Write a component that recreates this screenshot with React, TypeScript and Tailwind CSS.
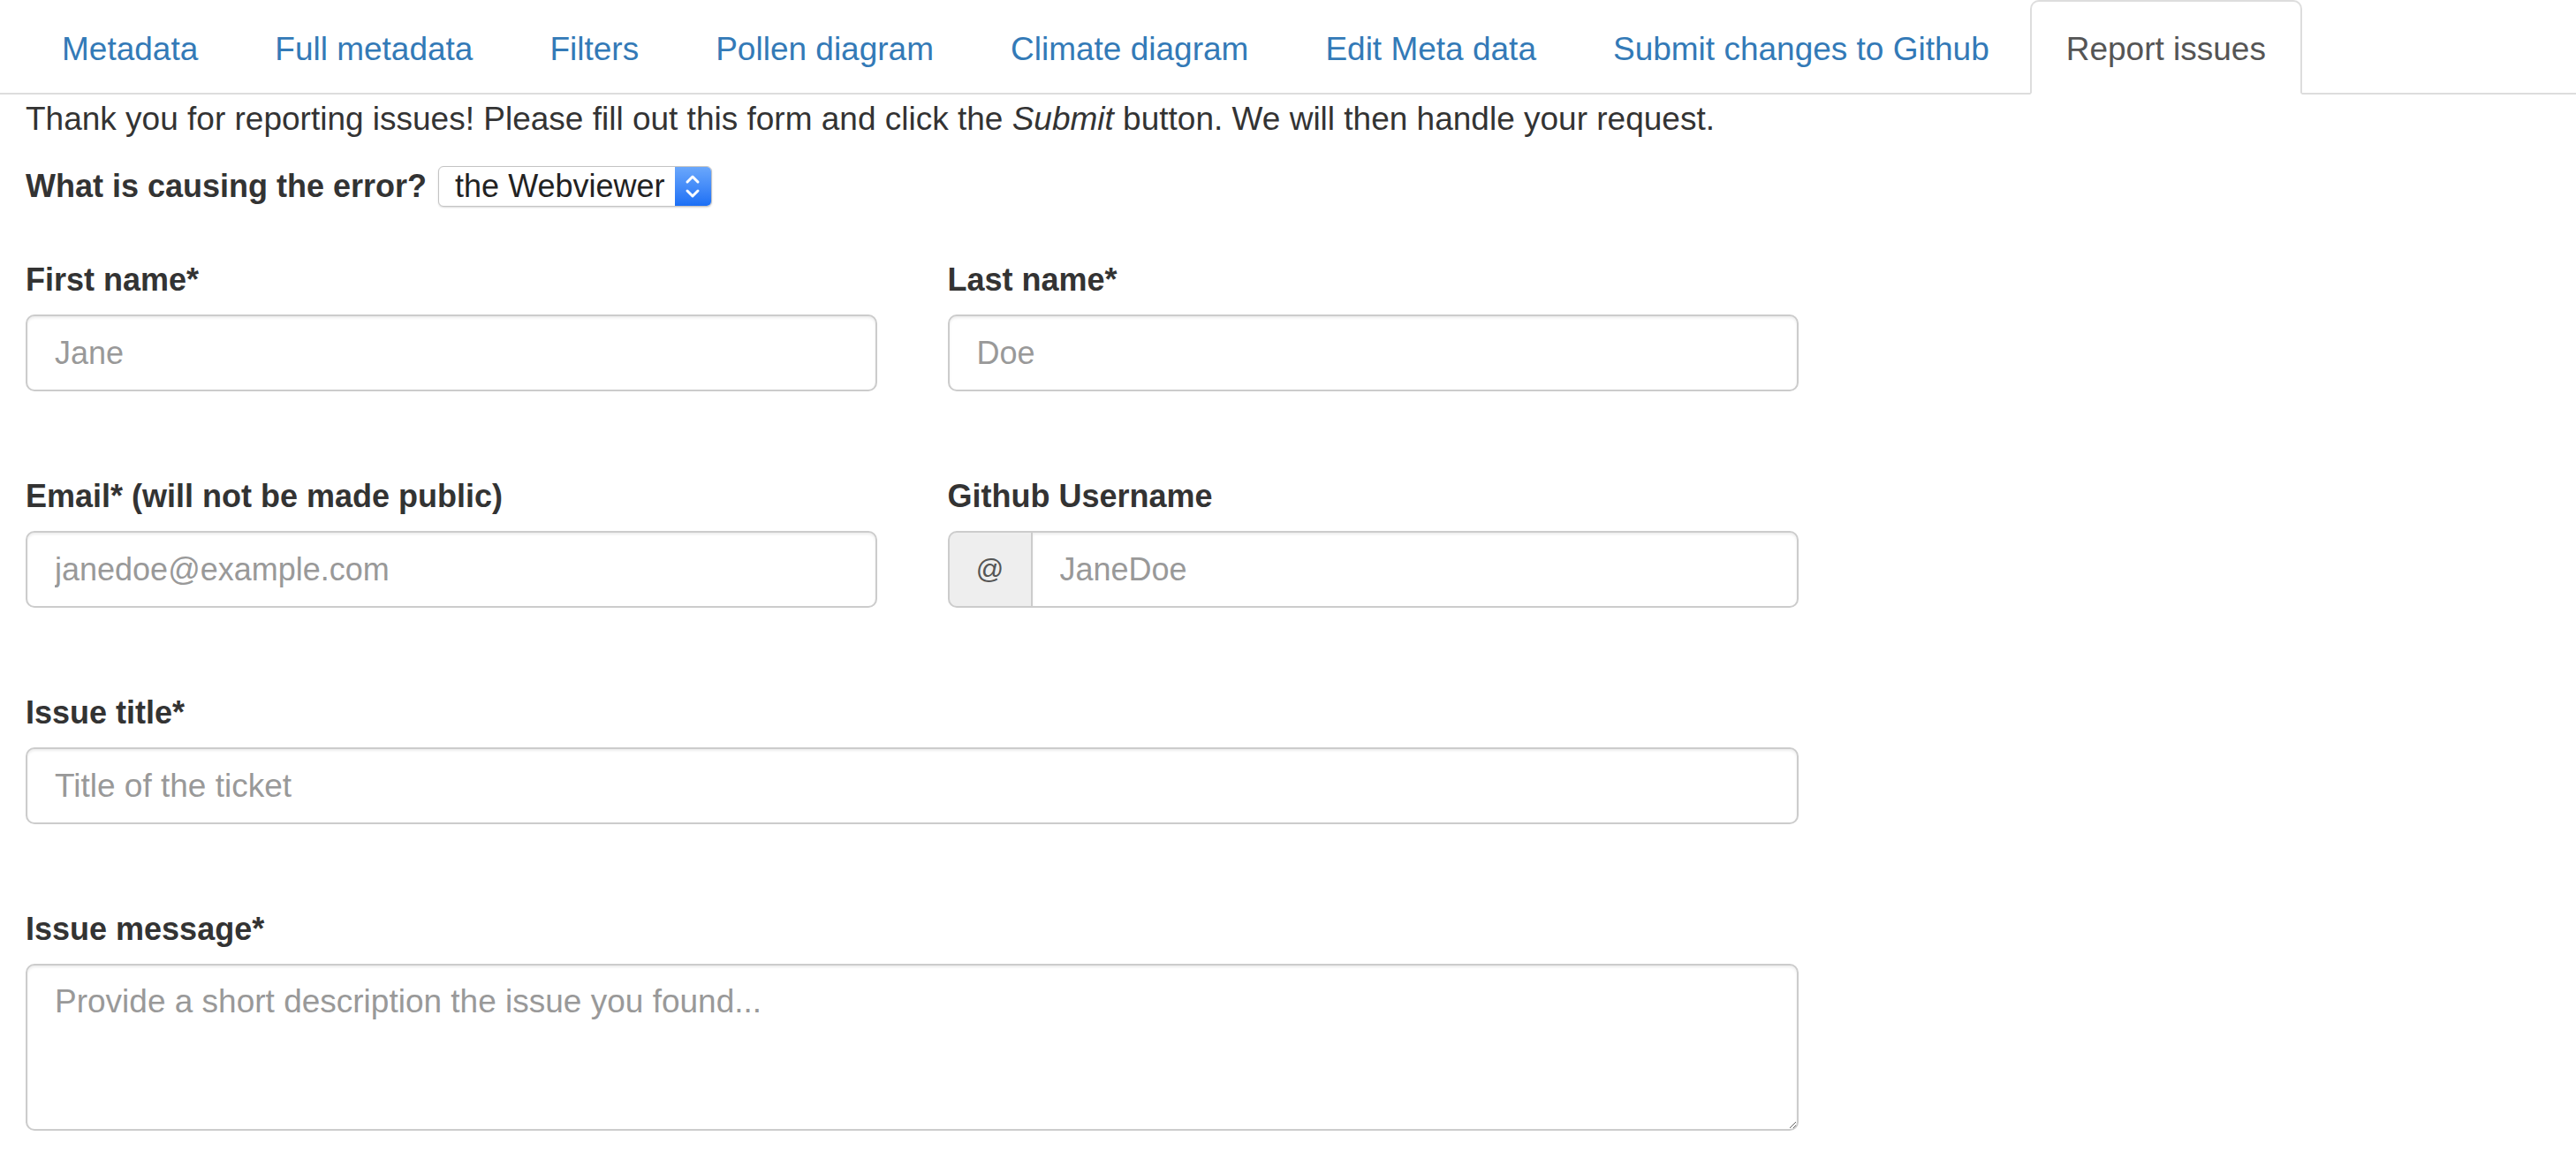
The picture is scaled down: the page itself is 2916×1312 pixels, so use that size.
import React from "react";

const tabs = [
  "Metadata",
  "Full metadata",
  "Filters",
  "Pollen diagram",
  "Climate diagram",
  "Edit Meta data",
  "Submit changes to Github",
  "Report issues",
];

const inputCls =
  "block w-full h-[87px] border-2 border-[#ccc] rounded-[10px] bg-white px-[31px] text-[36px] text-[#555] placeholder:text-[#999] shadow-[inset_0_2px_3px_rgba(0,0,0,0.075)] outline-none";

function Label({ children }: { children: React.ReactNode }) {
  return <label className="block font-bold text-[36px] leading-[52px] mb-[13px]">{children}</label>;
}

export default function App() {
  return (
    <div
      className="min-h-screen bg-white text-[#333] text-[37px] leading-[52px] px-[29px]"
      style={{ fontFamily: '"Liberation Sans", Arial, Helvetica, sans-serif' }}
    >
      {/* Tab bar */}
      <ul className="flex border-b-2 border-[#ddd] -mx-[29px] px-[29px]">
        {tabs.map((t) => {
          const active = t === "Report issues";
          return (
            <li key={t} className="-mb-[2px] mr-[5px]">
              <a
                className={`block border-2 rounded-t-[10px] px-[39px] pt-[28px] pb-[23px] leading-[52px] whitespace-nowrap ${
                  active
                    ? "bg-white border-[#ddd] border-b-transparent text-[#555]"
                    : "border-transparent text-[#337ab7]"
                }`}
              >
                {t}
              </a>
            </li>
          );
        })}
      </ul>

      <p className="pt-[2px] mb-[24px]">
        Thank you for reporting issues! Please fill out this form and click the <em>Submit</em> button. We
        will then handle your request.
      </p>

      {/* Error source select */}
      <div className="flex items-center h-[52px]">
        <span className="font-bold text-[36px]">What is causing the error?</span>
        <div className="ml-[13px] flex items-stretch h-[46px] border border-[#c4c4c4] rounded-[6px] bg-white shadow-[0_1px_2px_rgba(0,0,0,0.15)] overflow-hidden">
          <span className="pl-[18px] pr-[11px] leading-[44px] text-[36px] text-[#222]">the Webviewer</span>
          <span className="w-[41px] flex items-center justify-center bg-gradient-to-b from-[#6aa7fb] to-[#1b6ff5]">
            <svg width="20" height="32" viewBox="0 0 20 32" fill="none" stroke="white" strokeWidth="3" strokeLinecap="round" strokeLinejoin="round">
              <path d="M4 11 L10 5 L16 11" />
              <path d="M4 21 L10 27 L16 21" />
            </svg>
          </span>
        </div>
      </div>

      {/* Form */}
      <div className="w-[2007px] mt-[54px]">
        <div className="grid grid-cols-2 gap-x-[80px]">
          <div>
            <Label>First name*</Label>
            <input className={inputCls} placeholder="Jane" />
          </div>
          <div>
            <Label>Last name*</Label>
            <input className={inputCls} placeholder="Doe" />
          </div>
        </div>

        <div className="grid grid-cols-2 gap-x-[80px] mt-[93px]">
          <div>
            <Label>Email* (will not be made public)</Label>
            <input className={inputCls} placeholder="janedoe@example.com" />
          </div>
          <div>
            <Label>Github Username</Label>
            <div className="flex h-[87px]">
              <span className="w-[94px] flex items-center justify-center bg-[#eee] border-2 border-r-0 border-[#ccc] rounded-l-[10px] text-[#555] text-[31px]">
                @
              </span>
              <input
                className="flex-1 min-w-0 h-[87px] border-2 border-[#ccc] rounded-r-[10px] bg-white px-[31px] text-[36px] text-[#555] placeholder:text-[#999] shadow-[inset_0_2px_3px_rgba(0,0,0,0.075)] outline-none"
                placeholder="JaneDoe"
              />
            </div>
          </div>
        </div>

        <div className="mt-[93px]">
          <Label>Issue title*</Label>
          <input className={`${inputCls} text-[37px]`} placeholder="Title of the ticket" />
        </div>

        <div className="mt-[93px]">
          <Label>Issue message*</Label>
          <textarea
            className="block w-full h-[189px] border-2 border-[#ccc] rounded-[10px] bg-white px-[31px] pt-[15px] text-[37px] leading-[52px] text-[#555] placeholder:text-[#999] shadow-[inset_0_2px_3px_rgba(0,0,0,0.075)] outline-none resize-y"
            placeholder="Provide a short description the issue you found..."
          />
        </div>
      </div>
    </div>
  );
}
